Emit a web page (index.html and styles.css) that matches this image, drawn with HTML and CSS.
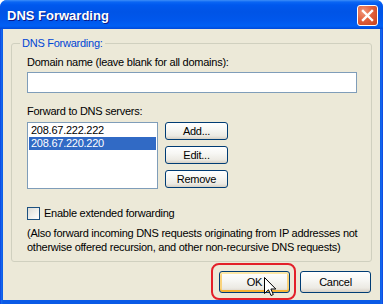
FILE: index.html
```html
<html>
<head>
  <link rel="stylesheet" href="styles.css">
</head>
<body>
  <div class="window">
    <div class="titlebar">
      <span class="title">DNS Forwarding</span>
      <span class="close">
        <svg width="13" height="13" viewBox="0 0 13 13">
          <path d="M2 2 L11 11 M11 2 L2 11" stroke="#fff" stroke-width="2.4" stroke-linecap="square"/>
        </svg>
      </span>
    </div>
    <div class="client">
      <fieldset class="group">
        <legend>DNS Forwarding:</legend>
        <div class="text-line first">Domain name (leave blank for all domains):</div>
        <div class="edit"></div>
        <div class="text-line servers">Forward to DNS servers:</div>
        <div class="list-row">
          <div class="listbox">
            <div class="item">208.67.222.222</div>
            <div class="item selected">208.67.220.220</div>
          </div>
          <div class="side-buttons">
            <button class="btn small">Add...</button>
            <button class="btn small">Edit...</button>
            <button class="btn small">Remove</button>
          </div>
        </div>
        <div class="checkbox-row">
          <span class="checkbox"></span>
          <span>Enable extended forwarding</span>
        </div>
        <div class="note">(Also forward incoming DNS requests originating from IP addresses not<br>otherwise offered recursion, and other non-recursive DNS requests)</div>
      </fieldset>
      <div class="dialog-buttons">
        <div class="ok-wrap">
          <button class="btn large hot">OK</button>
          <svg class="cursor" width="13" height="20" viewBox="0 0 13 20">
            <path d="M0.5 0.5 L0.5 16.5 L4.5 12.8 L7 18.5 L9.3 17.5 L6.9 12 L11.8 12 Z" fill="#fff" stroke="#000" stroke-width="1"/>
          </svg>
        </div>
        <button class="btn large">Cancel</button>
      </div>
    </div>
  </div>
</body>
</html>
```

FILE: styles.css
```css
body {
  margin: 0;
  font-family: 'Liberation Sans', Tahoma, sans-serif;
  font-size: 11px;
  letter-spacing: -0.25px;
  color: #000;
  background: #fff;
}

.window {
  width: 383px;
  height: 304px;
  display: flex;
  flex-direction: column;
  background: linear-gradient(to right, #0831d9 0, #166aee 1px, #0a5ae6 3px, #0a5ae6 380px, #166aee 382px, #0831d9 383px);
  border-radius: 7px 7px 0 0;
  overflow: hidden;
}

.titlebar {
  height: 29px;
  flex: none;
  display: flex;
  align-items: center;
  justify-content: space-between;
  padding: 0 5px 0 7px;
  background: linear-gradient(#3d8ef8 0, #0a66f4 2px, #0058ee 5px, #0054e6 12px, #0057ec 20px, #0060f4 26px, #0049da 29px);
}

.title {
  color: #fff;
  font-weight: bold;
  font-size: 13px;
  letter-spacing: 0;
  text-shadow: 1px 1px #0a1a88;
  margin-top: 1px;
}

.close {
  width: 19px;
  height: 19px;
  border: 1px solid #fff;
  border-radius: 3px;
  display: flex;
  align-items: center;
  justify-content: center;
  background: radial-gradient(circle at 30% 30%, #f0967a 0, #e2613d 45%, #c6401a 100%);
  margin-top: 1px;
}

.client {
  flex: 1;
  margin: 0 3px 4px 3px;
  background: #ece9d8;
  padding: 8px 8px 0 8px;
  display: flex;
  flex-direction: column;
}

.group {
  margin: 0;
  padding: 0 14px 7px 15px;
  border: 1px solid #d0d0bf;
  border-radius: 3px;
}

.group legend {
  color: #0046d5;
  padding: 0 2px;
  margin-left: -7px;
  line-height: 13px;
}

.text-line {
  line-height: 13px;
}

.text-line.first {
  margin-top: 6px;
}

.text-line.servers {
  margin-top: 12px;
}

.edit {
  margin-top: 3px;
  height: 19px;
  width: 328px;
  border: 1px solid #7f9db9;
  background: #fff;
}

.list-row {
  margin-top: 4px;
  display: flex;
  gap: 7px;
  height: 67px;
}

.listbox {
  width: 127px;
  border: 1px solid #7f9db9;
  background: #fff;
  padding: 1px;
}

.item {
  line-height: 13px;
  padding-left: 2px;
  white-space: nowrap;
}

.item.selected {
  background: #316ac5;
  color: #fff;
}

.side-buttons {
  display: flex;
  flex-direction: column;
  gap: 6px;
}

.btn {
  font-family: 'Liberation Sans', Tahoma, sans-serif;
  font-size: 11px;
  letter-spacing: -0.25px;
  color: #000;
  border: 1px solid #003c74;
  border-radius: 3px;
  background: linear-gradient(#ffffff 0, #f7f7f4 40%, #eceae3 80%, #d6d0c5 100%);
  padding: 0;
  cursor: pointer;
}

.btn.small {
  width: 63px;
  height: 18px;
}

.btn.large {
  width: 71px;
  height: 22px;
}

.btn.hot {
  box-shadow: inset 0 2px #fce7a6, inset 0 -2px #f5b333, inset 2px 0 #f9d37c, inset -2px 0 #f9d37c;
}

.checkbox-row {
  margin-top: 18px;
  display: flex;
  align-items: center;
  gap: 4px;
  line-height: 13px;
}

.checkbox {
  width: 11px;
  height: 11px;
  border: 1px solid #1c5180;
  background: linear-gradient(135deg, #dcdcd7 0, #f2f2ee 60%, #ffffff 100%);
}

.note {
  margin-top: 6px;
  line-height: 14px;
  white-space: nowrap;
}

.dialog-buttons {
  margin-top: 9px;
  display: flex;
  justify-content: flex-end;
  gap: 10px;
  padding-right: 1px;
}

.ok-wrap {
  position: relative;
  display: flex;
}

.ok-wrap::before {
  content: "";
  position: absolute;
  left: -8px;
  right: -6px;
  top: -8px;
  bottom: -7px;
  border: 2px solid #e3202a;
  border-radius: 8px;
}

.cursor {
  position: absolute;
  left: 45px;
  top: 6px;
}
```
